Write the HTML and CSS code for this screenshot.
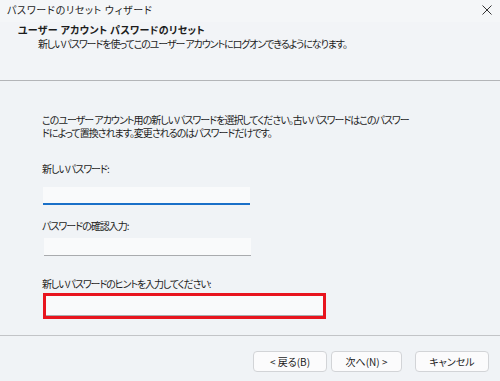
FILE: index.html
```html
<!DOCTYPE html>
<html lang="ja">
<head>
    <meta charset="UTF-8">
    <title>パスワードのリセット ウィザード</title>
    <link rel="stylesheet" href="styles.css">
</head>
<body>
    <div class="wizard">
        <div class="titlebar">
            <span class="title">パスワードのリセット ウィザード</span>
            <svg class="close" width="10" height="10" viewBox="0 0 10 10">
                <path d="M0.5 0.5 L9.5 9.5 M9.5 0.5 L0.5 9.5" stroke="#333" stroke-width="1" fill="none"/>
            </svg>
        </div>

        <div class="header">
            <p class="header-title">ユーザー アカウント パスワードのリセット</p>
            <p class="header-sub">新しいパスワードを使ってこのユーザー アカウントにログオンできるようになります。</p>
        </div>

        <div class="content">
            <p class="desc">このユーザー アカウント用の新しいパスワードを選択してください。古いパスワードはこのパスワー<br>ドによって置換されます。変更されるのはパスワードだけです。</p>

            <p class="label first">新しいパスワード:</p>
            <div class="field active"></div>

            <p class="label second">パスワードの確認入力:</p>
            <div class="field confirm"></div>

            <p class="label third">新しいパスワードのヒントを入力してください:</p>
            <div class="hint-box">
                <div class="field wide"></div>
            </div>
        </div>

        <div class="footer">
            <button class="btn">&lt; 戻る(B)</button>
            <button class="btn next">次へ(N) &gt;</button>
            <button class="btn cancel">キャンセル</button>
        </div>
    </div>
</body>
</html>
```

FILE: styles.css
```css
body {
    margin: 0;
    background: #f0f3f6;
    font-family: "Noto Sans CJK JP", "Noto Sans", sans-serif;
    font-size: 10px;
    color: #1c1c1c;
    font-feature-settings: "palt";
}
p {
    margin: 0;
}
.wizard {
    width: 500px;
    height: 381px;
    display: flex;
    flex-direction: column;
}
.titlebar {
    height: 22px;
    display: flex;
    align-items: center;
    justify-content: space-between;
    padding: 0 8px 3px 7px;
    box-sizing: border-box;
    background: #f4f6f8;
}
.title {
    letter-spacing: 0.7px;
}
.header {
    height: 59px;
    padding: 1px 0 0 18px;
    box-sizing: border-box;
    border-bottom: 1px solid #b3b5b8;
    background: #f2f4f7;
}
.header-title {
    font-weight: bold;
    line-height: 14px;
    letter-spacing: 0.3px;
}
.header-sub {
    padding-left: 20px;
    line-height: 14px;
    letter-spacing: -1.1px;
}
.content {
    flex: 1;
    padding: 32px 0 0 42px;
    border-bottom: 1px solid #c2c4c7;
}
.desc {
    line-height: 13px;
    letter-spacing: -1px;
}
.label {
    line-height: 14px;
    letter-spacing: -1px;
}
.label.first {
    margin-top: 23px;
}
.label.second {
    margin-top: 14px;
}
.label.third {
    margin-top: 21px;
    letter-spacing: -1.1px;
}
.field {
    width: 207px;
    margin-left: 1px;
    background: #f9fafb;
}
.field.active {
    height: 16px;
    margin-top: 11px;
    border-bottom: 2px solid #1a70c8;
}
.field.confirm {
    height: 17px;
    margin-top: 5px;
    margin-left: 2px;
    border-bottom: 1px solid #a9abae;
}
.hint-box {
    width: 277px;
    margin-top: 2px;
    margin-left: 1px;
    border: 3px solid #e8141e;
}
.field.wide {
    width: auto;
    height: 19px;
    margin: 0;
    border-bottom: 1px solid #a9abae;
}
.footer {
    height: 45px;
    display: flex;
    align-items: flex-start;
    padding: 15px 11px 0 0;
    justify-content: flex-end;
    box-sizing: border-box;
}
.btn {
    height: 21px;
    width: 74px;
    padding: 0;
    font-family: inherit;
    font-size: 10px;
    font-feature-settings: "palt";
    color: #1c1c1c;
    background: #fbfbfc;
    border: 1px solid #d2d4d7;
    border-radius: 4px;
}
.next {
    width: 71px;
    margin-left: 4px;
}
.cancel {
    margin-left: 13px;
}
```
